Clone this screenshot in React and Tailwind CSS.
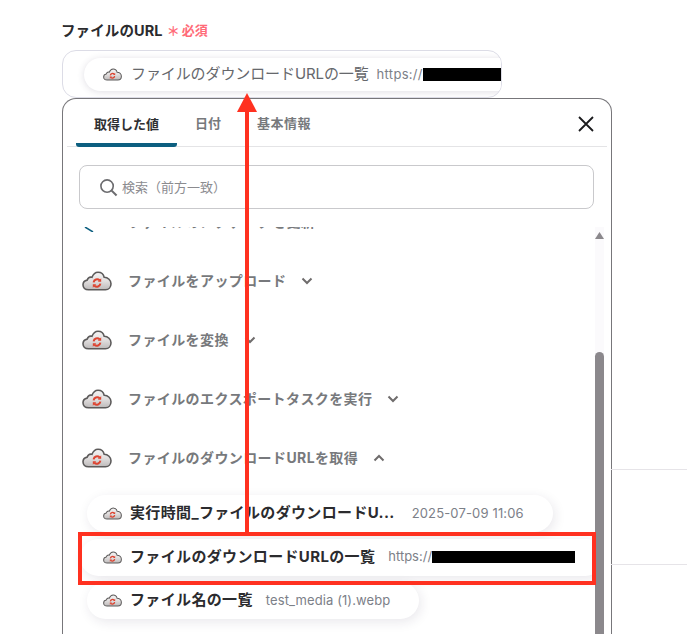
const FONT = "font-['Inter','Noto_Sans_CJK_JP',sans-serif]";

function Cloud({ className }) {
  return (
    <svg viewBox="0 0 30 20" className={className}>
      <defs>
        <linearGradient id="cloudfill" x1="0" y1="0" x2="0" y2="1">
          <stop offset="0" stopColor="#f5f4f4" />
          <stop offset="0.5" stopColor="#e2dfdf" />
          <stop offset="1" stopColor="#bdbaba" />
        </linearGradient>
      </defs>
      <path
        d="M6.500 18.800C3 18.800 1 16.500 1 13.800c0-2.400 1.700-4.300 4.200-4.700C6 6.800 8 5.800 10 6.300 11.200 3 13.500 1.200 16 1.200c3.200 0 5.600 2.200 6.200 5.100 3.800 0 6.800 3 6.800 6.500 0 3.400-2.300 6-5.500 6z"
        fill="url(#cloudfill)"
        stroke="#5c5a5a"
        strokeWidth="1.600"
      />
      <path d="M11.600 11.400a3.600 3.600 0 0 1 6-2.100" fill="none" stroke="#dd4431" strokeWidth="2" />
      <path d="M18.400 12.600a3.600 3.600 0 0 1-6 2.100" fill="none" stroke="#dd4431" strokeWidth="2" />
      <path d="M19.200 7.300v3.400h-3.400z" fill="#dd4431" />
      <path d="M10.800 16.700v-3.400h3.400z" fill="#dd4431" />
    </svg>
  );
}

function Chevron({ up }) {
  return (
    <svg viewBox="0 0 12 8" className="w-3 h-2">
      <path
        d={up ? "M1.500 6.500 6 2l4.500 4.500" : "M1.500 1.500 6 6l4.500-4.500"}
        fill="none"
        stroke="#6f6c6c"
        strokeWidth="2"
      />
    </svg>
  );
}

function Group({ label, up }) {
  return (
    <div className="h-[59px] flex items-center pl-[19px] gap-[15px]">
      <Cloud className="w-[30px] h-5 shrink-0" />
      <span className="ml-[1px] text-[14px] font-bold tracking-[0.4px] text-[#77797c]">{label}</span>
      <Chevron up={up} />
    </div>
  );
}

function Chip({ name, value, valueClass = "", className = "", children }) {
  return (
    <div className={`h-[37px] flex items-center rounded-full bg-white shadow-[2px_3px_12px_rgba(40,30,70,0.10)] pl-[16px] pr-[29px] ${className}`}>
      <Cloud className="w-[19px] h-[13px] shrink-0" />
      <span className="ml-[8px] text-[15px] font-bold tracking-[0.35px] text-[#2b2b2e] whitespace-nowrap">{name}</span>
      {value && <span className={`text-[13px] text-[#7c8088] whitespace-nowrap ${valueClass}`}>{value}</span>}
      {children}
    </div>
  );
}

export default function App() {
  return (
    <div className={`${FONT} relative w-[687px] h-[634px] overflow-hidden bg-white`}>
      <div className="absolute left-[611px] right-0 top-[469px] h-px bg-[#e6e4e8]" />
      <div className="absolute left-[611px] right-0 top-[564px] h-px bg-[#e6e4e8]" />

      <div className="pt-[20px] pl-[61px] w-[550px]">
        <div className="h-[21px] flex items-center">
          <span className="text-[14.500px] font-bold tracking-[0.1px] text-[#2b2b2e]">ファイルのURL</span>
          <span className="ml-[4px] text-[13px] font-bold text-[#ff6b78] translate-y-[1px]">＊</span>
          <span className="ml-[2px] text-[13px] font-bold text-[#ff6b78]">必須</span>
        </div>

        <div className="mt-[9px] ml-px w-[440px] h-[48px] rounded-[14px] border border-[#dcdce6] bg-white pl-[21px] pt-[7px] overflow-hidden">
          <div className="w-[440px] h-[33px] flex items-center rounded-l-full bg-white shadow-[0_1px_7px_rgba(60,50,90,0.16)] pl-[19px]">
            <Cloud className="w-[19px] h-[13px] shrink-0" />
            <span className="ml-[9px] text-[15px] tracking-[-0.1px] text-[#66686c] whitespace-nowrap">ファイルのダウンロードURLの一覧</span>
            <span className="ml-[8px] text-[13px] tracking-[0.3px] text-[#7c8088]">https://</span>
            <span className="w-[78px] h-[13px] bg-black" />
          </div>
        </div>

        <div className="ml-px w-[550px] h-[560px] rounded-t-[14px] border border-b-0 border-[#77767a] bg-white">
          <div className="h-[48px] mx-[4px] flex items-end border-b border-[#e4e4e6] relative">
            <div className="w-[101px] ml-[9px] h-[47px] pt-[7px] flex items-center justify-center border-b-[4px] border-[#0d5f80] rounded-b-[3px] -mb-px text-[13px] font-semibold text-[#2f3033]">取得した値</div>
            <div className="ml-[18px] h-[47px] pt-[3px] flex items-center text-[13px] font-semibold text-[#77797c]">日付</div>
            <div className="ml-[36px] h-[47px] pt-[3px] flex items-center text-[13px] font-semibold tracking-[0.5px] text-[#77797c]">基本情報</div>
            <svg viewBox="0 0 18 18" className="absolute right-[12px] top-[16px] w-[18px] h-[18px]">
              <path d="M2 2l14 14M16 2 2 16" stroke="#1b1b1d" strokeWidth="1.800" fill="none" />
            </svg>
          </div>

          <div className="mt-[18px] ml-[16px] w-[515px] h-[44px] rounded-[8px] border border-[#c9c9cc] flex items-center pl-[19px] pt-[1px]">
            <svg viewBox="0 0 20 20" className="w-[19px] h-[19px]">
              <circle cx="8.500" cy="8.500" r="6.500" fill="none" stroke="#6c6c6f" strokeWidth="1.700" />
              <path d="M13.300 13.300 18.500 18.500" stroke="#6c6c6f" strokeWidth="2.200" />
            </svg>
            <span className="ml-[4px] text-[13px] text-[#8b8b8f]">検索（前方一致）</span>
          </div>

          <div className="mt-[18px] h-[430px] flex">
            <div className="w-[532px] overflow-hidden">
              <div className="-mt-[35px]">
                <div className="h-[59px] flex items-center pl-[17px]">
                  <svg viewBox="0 0 30 20" className="w-[30px] h-5"><path d="M5 15l8 5" stroke="#0d5f80" strokeWidth="1.500" /></svg>
                  <span className="ml-[18px] text-[14px] font-bold tracking-[0.4px] text-[#77797c] whitespace-nowrap">ファイルのメタデータを更新</span>
                </div>
                <Group label="ファイルをアップロード" />
                <Group label="ファイルを変換" />
                <Group label="ファイルのエクスポートタスクを実行" />
                <Group label="ファイルのダウンロードURLを取得" up />
                <div className="flex flex-col items-start gap-[6.500px] pl-[24px] pt-[8px]">
                  <Chip name="実行時間_ファイルのダウンロードU..." value="2025-07-09 11:06" valueClass="ml-[17px] tracking-[0.15px]" />
                  <Chip name="ファイルのダウンロードURLの一覧" value="https://" valueClass="ml-[13px]" className="-ml-[7px] pl-[23px]">
                    <span className="w-[143px] h-[12px] bg-black" />
                  </Chip>
                  <Chip name="ファイル名の一覧" value="test_media (1).webp" valueClass="ml-[13px] tracking-[0.1px]" />
                </div>
              </div>
            </div>
            <div className="w-[9px] flex flex-col items-center bg-[#fbfafc]">
              <svg viewBox="0 0 9 7" className="w-[9px] h-[7px] mt-[5px] shrink-0"><path d="M4.500 0 9 7H0z" fill="#8b888c" /></svg>
              <div className="mt-[113px] w-[9px] flex-1 bg-[#8b888c] rounded-t-[5px]" />
            </div>
          </div>
        </div>
      </div>

      {/* annotation: arrow */}
      <div className="absolute left-[245px] top-[110px] w-[4px] h-[423px] bg-[#ff3120]" />
      <svg viewBox="0 0 20 19" className="absolute left-[237px] top-[93px] w-[20px] h-[19px]"><path d="M10 0 20 19H0z" fill="#ff3120" /></svg>
      {/* annotation: box */}
      <div className="absolute left-[78px] top-[532px] w-[518px] h-[53px] border-[4px] border-[#ff3120]" />
    </div>
  );
}
